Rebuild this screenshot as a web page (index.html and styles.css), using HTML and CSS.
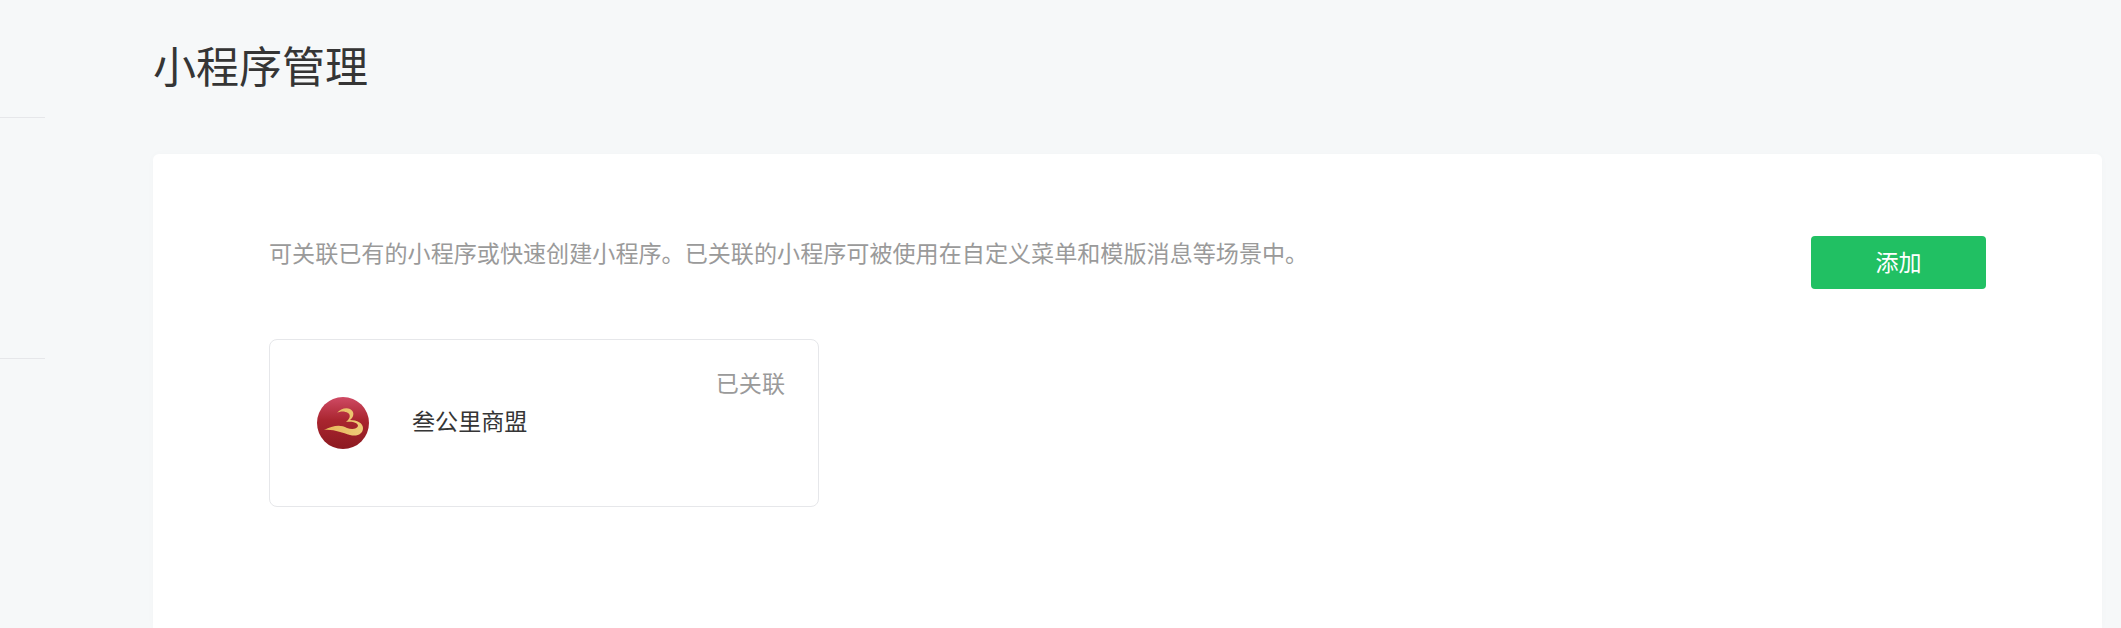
FILE: index.html
```html
<!DOCTYPE html>
<html lang="zh-CN">
<head>
	<meta charset="utf-8">
	<title>小程序管理</title>
	<link rel="stylesheet" href="styles.css">
</head>
<body>
<div class="page">
	<div class="side">
		<div class="side-top"></div>
		<div class="side-mid"></div>
	</div>
	<div class="main">
		<h1 class="title">小程序管理</h1>
		<div class="panel">
			<div class="intro">
				<p class="desc">可关联已有的小程序或快速创建小程序。已关联的小程序可被使用在自定义菜单和模版消息等场景中。</p>
				<button class="add">添加</button>
			</div>
			<div class="app">
				<div class="app-status">已关联</div>
				<div class="app-info">
					<svg class="app-logo" viewBox="0 0 52 52">
						<defs>
							<linearGradient id="red" x1="0" y1="0" x2="0" y2="1">
								<stop offset="0" stop-color="#cf4a64"/>
								<stop offset="0.45" stop-color="#a9252f"/>
								<stop offset="1" stop-color="#8c1a20"/>
							</linearGradient>
							<linearGradient id="gold" x1="0" y1="0" x2="1" y2="0">
								<stop offset="0" stop-color="#e6b65a"/>
								<stop offset="1" stop-color="#eecb78"/>
							</linearGradient>
						</defs>
						<circle cx="26" cy="26" r="26" fill="url(#red)"/>
						<path d="M20 16C23 12 29 10 33 12C37 14 38 19 33 23C40 23 46 26 46 31C46 37 40 40 33 38C25 36 17 32 7 33C15 29 23 27 30 31C35 33 40 32 41 29C41 26 36 24 29 25C33 22 34 18 31 16C28 14 23 14 20 16Z" fill="url(#gold)"/>
					</svg>
					<div class="app-name">叁公里商盟</div>
				</div>
			</div>
		</div>
	</div>
</div>
</body>
</html>
```

FILE: styles.css
```css
html, body {
	height: 100%;
}

body {
	margin: 0;
	overflow: hidden;
	background-color: #f6f8f9;
	font-family: "Noto Sans CJK SC", "Liberation Sans", sans-serif;
	font-size: 23.1px;
	color: #353535;
}

.page {
	display: flex;
	height: 100%;
}

.side {
	flex: 0 0 153px;
}

.side-top {
	width: 45px;
	height: 117px;
	border-bottom: 1px solid #e6e7ea;
}

.side-mid {
	width: 45px;
	height: 240px;
	border-bottom: 1px solid #e6e7ea;
}

.main {
	flex: 1;
	display: flex;
	flex-direction: column;
	padding-right: 19px;
	min-width: 0;
}

.title {
	margin: 0;
	height: 154px;
	padding-top: 33px;
	box-sizing: border-box;
	font-size: 43px;
	line-height: 62px;
	font-weight: 400;
}

.panel {
	flex: 1;
	padding: 82px 116px 0;
	background-color: #fff;
	border-radius: 6px 6px 0 0;
	box-shadow: 0 0 8px rgba(0, 0, 0, 0.02);
}

.intro {
	display: flex;
	justify-content: space-between;
	align-items: flex-start;
	height: 103px;
}

.desc {
	margin: 0;
	line-height: 32px;
	color: #9a9a9a;
}

.add {
	width: 175px;
	height: 53px;
	padding: 0 0 3px;
	border: 0;
	border-radius: 4px;
	background-color: #21c063;
	color: #fff;
	font-family: inherit;
	font-size: 23.1px;
}

.app {
	box-sizing: border-box;
	width: 550px;
	height: 168px;
	padding: 25px 33px 0 47px;
	border: 1px solid #e6e7ea;
	border-radius: 8px;
}

.app-status {
	text-align: right;
	line-height: 34px;
	color: #9a9a9a;
}

.app-info {
	display: flex;
	align-items: center;
	gap: 43px;
	margin-top: -2px;
}

.app-logo {
	width: 52px;
	height: 52px;
}

.app-name {
	padding-bottom: 6px;
	line-height: 34px;
}
```
